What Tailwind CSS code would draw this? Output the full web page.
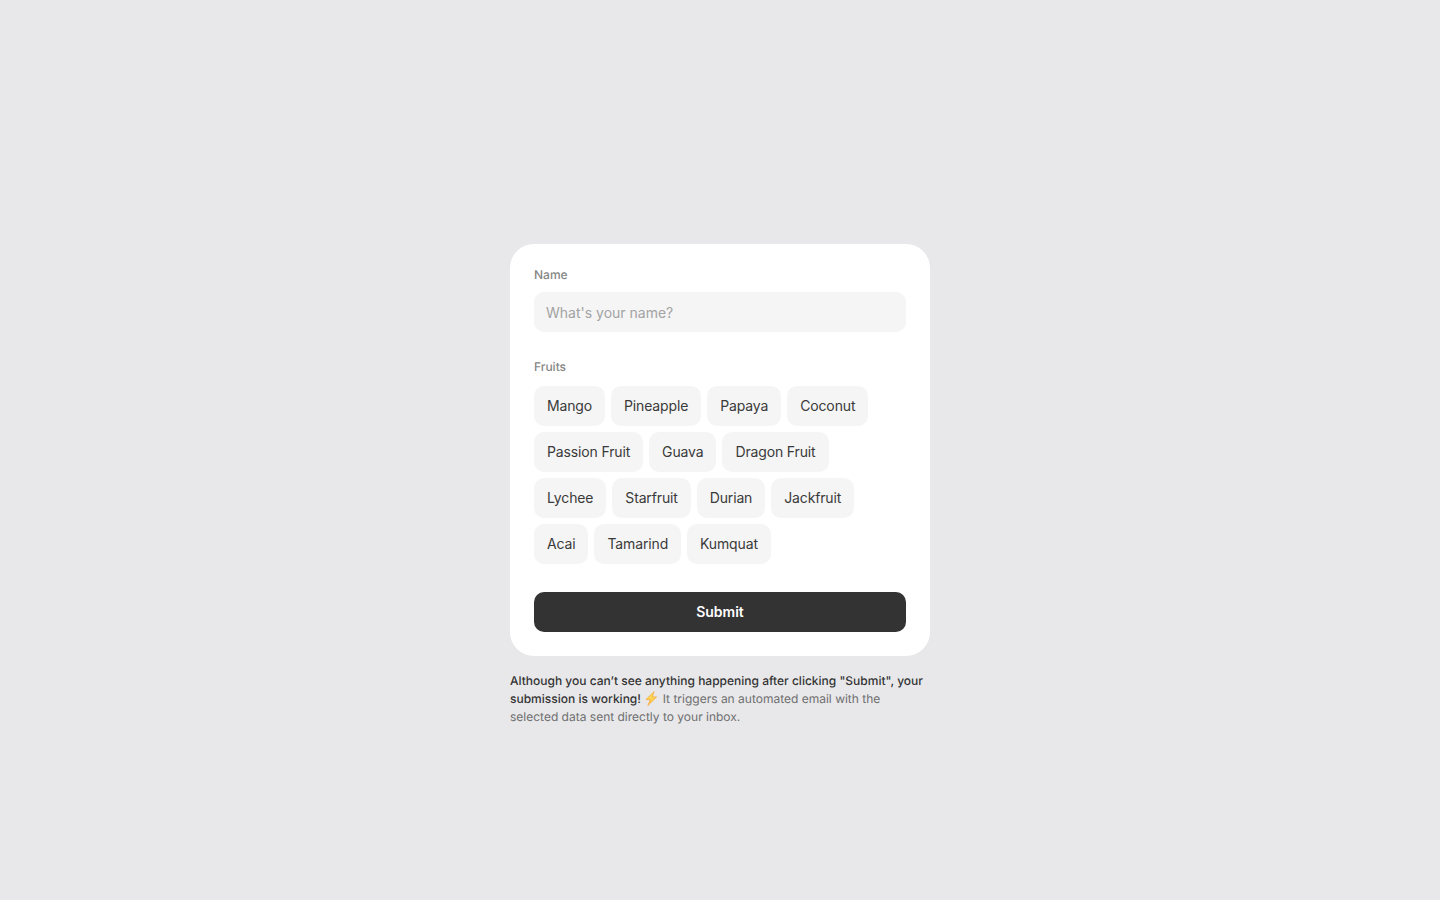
<!DOCTYPE html>
<html lang="en">
<head>
    <meta charset="UTF-8">
    <title>Fruits form</title>
    <script src="https://cdn.jsdelivr.net/npm/@tailwindcss/browser@4"></script>
</head>
<body class="bg-[#e8e8ea] font-['Inter',sans-serif] [text-rendering:geometricPrecision] min-h-screen pt-[70px] flex items-center justify-center">
    <div class="w-[420px]">
        <form class="bg-white rounded-[24px] p-6 flex flex-col">
            <label class="text-xs font-medium text-[#858585] mb-2.5 h-[14px] flex items-center">Name</label>
            <input type="text" placeholder="What's your name?" class="h-10 bg-[#f5f5f5] rounded-[10px] px-3 text-sm outline-none placeholder:text-[#a3a3a3]">
            <label class="text-xs font-medium text-[#858585] mt-7 mb-2 h-[14px] flex items-center">Fruits</label>
            <div class="flex flex-wrap gap-1.5 mt-1 tracking-[-0.009em]">
                <button type="button" class="h-10 px-[13px] bg-[#f5f5f5] rounded-[10px] text-sm text-[#3a3a3a]">Mango</button>
                <button type="button" class="h-10 px-[13px] bg-[#f5f5f5] rounded-[10px] text-sm text-[#3a3a3a]">Pineapple</button>
                <button type="button" class="h-10 px-[13px] bg-[#f5f5f5] rounded-[10px] text-sm text-[#3a3a3a]">Papaya</button>
                <button type="button" class="h-10 px-[13px] bg-[#f5f5f5] rounded-[10px] text-sm text-[#3a3a3a]">Coconut</button>
                <button type="button" class="h-10 px-[13px] bg-[#f5f5f5] rounded-[10px] text-sm text-[#3a3a3a]">Passion Fruit</button>
                <button type="button" class="h-10 px-[13px] bg-[#f5f5f5] rounded-[10px] text-sm text-[#3a3a3a]">Guava</button>
                <button type="button" class="h-10 px-[13px] bg-[#f5f5f5] rounded-[10px] text-sm text-[#3a3a3a]">Dragon Fruit</button>
                <button type="button" class="h-10 px-[13px] bg-[#f5f5f5] rounded-[10px] text-sm text-[#3a3a3a]">Lychee</button>
                <button type="button" class="h-10 px-[13px] bg-[#f5f5f5] rounded-[10px] text-sm text-[#3a3a3a]">Starfruit</button>
                <button type="button" class="h-10 px-[13px] bg-[#f5f5f5] rounded-[10px] text-sm text-[#3a3a3a]">Durian</button>
                <button type="button" class="h-10 px-[13px] bg-[#f5f5f5] rounded-[10px] text-sm text-[#3a3a3a]">Jackfruit</button>
                <button type="button" class="h-10 px-[13px] bg-[#f5f5f5] rounded-[10px] text-sm text-[#3a3a3a]">Acai</button>
                <button type="button" class="h-10 px-[13px] bg-[#f5f5f5] rounded-[10px] text-sm text-[#3a3a3a]">Tamarind</button>
                <button type="button" class="h-10 px-[13px] bg-[#f5f5f5] rounded-[10px] text-sm text-[#3a3a3a]">Kumquat</button>
            </div>
            <button type="submit" class="h-10 mt-7 bg-[#333] rounded-[10px] text-sm font-semibold text-white">Submit</button>
        </form>
        <p class="mt-4 text-xs leading-[18px] text-[#6e6e6e]"><span class="font-medium text-[#333]">Although you can’t see anything happening after clicking "Submit", your submission is working!</span> <svg class="inline-block align-[-3px] w-[15px] h-[15px]" viewBox="0 0 15 15"><defs><linearGradient id="bolt" x1="0" y1="0" x2="0" y2="1"><stop offset="0" stop-color="#ffe066"/><stop offset="1" stop-color="#ffc73d"/></linearGradient></defs><path d="M10 .6 2 8.6H6.4L3.8 14.6 12.6 5.9H8.4z" fill="url(#bolt)" stroke="#f8a93a" stroke-width=".8" stroke-linejoin="round"/></svg> It triggers an automated email with the selected data sent directly to your inbox.</p>
    </div>
</body>
</html>
